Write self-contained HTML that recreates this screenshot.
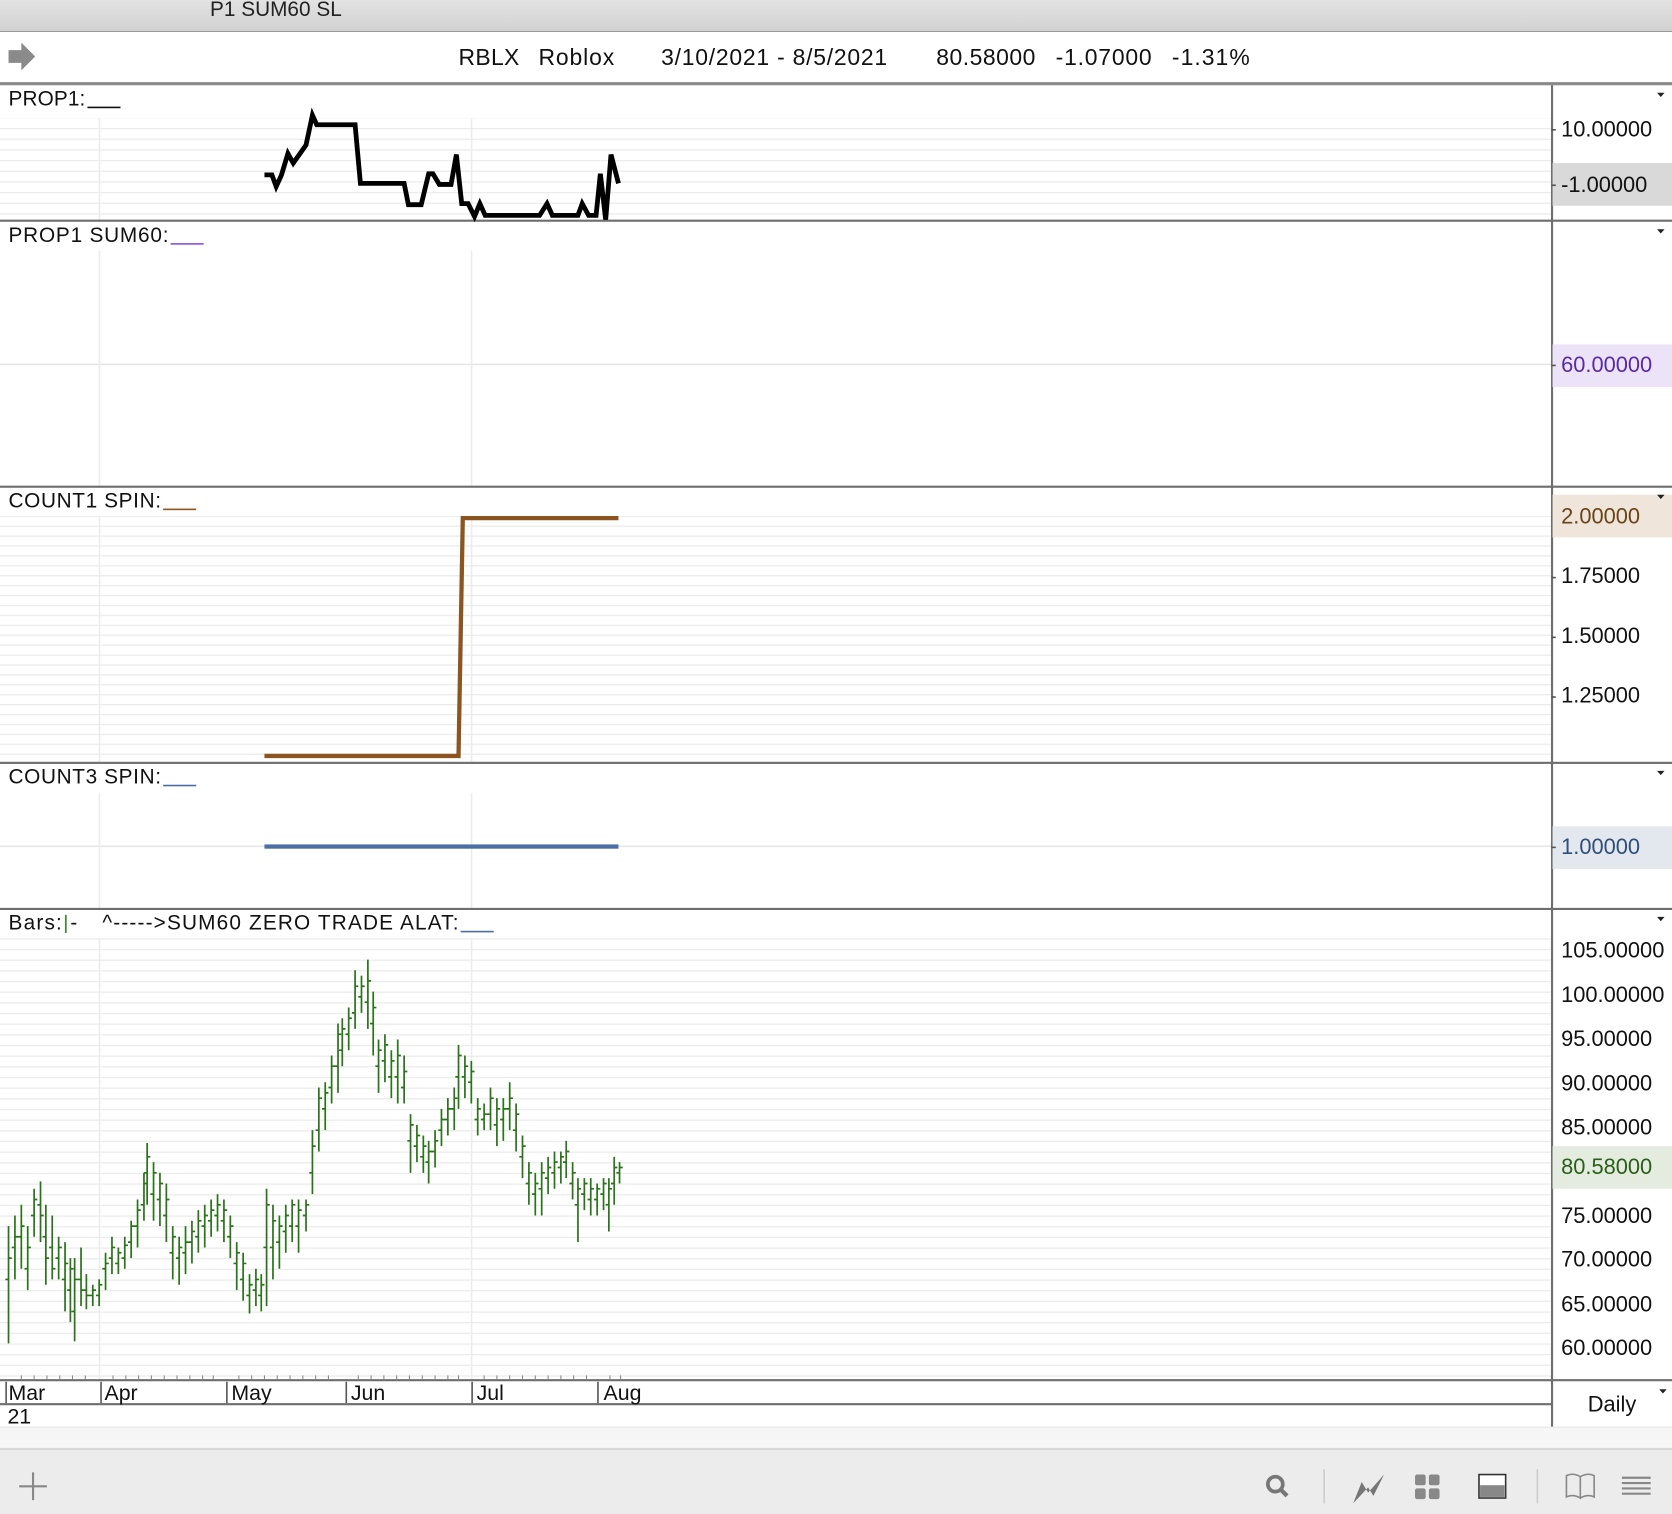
<!DOCTYPE html>
<html><head><meta charset="utf-8"><style>html,body{margin:0;padding:0;background:#fff}svg{display:block}text{font-family:"Liberation Sans",Arial,sans-serif}</style></head><body>
<svg width="1672" height="1514" viewBox="0 0 1568 1420" preserveAspectRatio="none" xmlns="http://www.w3.org/2000/svg">
<defs>
<pattern id="g10" width="1455" height="10" patternUnits="userSpaceOnUse"><rect width="1455" height="1.2" fill="#ebebeb"/></pattern>
<pattern id="g9" width="1455" height="9.3" patternUnits="userSpaceOnUse"><rect width="1455" height="1.2" fill="#ebebeb"/></pattern>
<linearGradient id="tb" x1="0" y1="0" x2="0" y2="1"><stop offset="0" stop-color="#e2e2e2"/><stop offset="1" stop-color="#d2d2d2"/></linearGradient>
</defs>
<rect width="1568" height="1420" fill="#fff"/>
<rect x="0" y="0" width="1568" height="29" fill="url(#tb)"/>
<rect x="0" y="29" width="1568" height="1" fill="#9a9a9a"/>
<text x="197" y="15" font-size="19.5" fill="#222">P1 SUM60 SL</text>
<path d="M8 47h12v-7l13 13-13 13v-7H8z" fill="#8a8a8a"/>
<g font-size="21.5" fill="#111">
<text x="430" y="61" textLength="57">RBLX</text><text x="505" y="61" textLength="71">Roblox</text><text x="620" y="61" textLength="212">3/10/2021 - 8/5/2021</text>
<text x="878" y="61" textLength="93">80.58000</text><text x="990" y="61" textLength="90">-1.07000</text><text x="1099" y="61" textLength="73">-1.31%</text>
</g>
<rect x="0" y="77" width="1568" height="3" fill="#8a8a8a"/>
<rect x="0" y="111" width="1455" height="95" fill="url(#g10)"/>
<rect x="0" y="484" width="1455" height="230" fill="url(#g9)"/>
<rect x="0" y="880" width="1455" height="412" fill="url(#g10)"/>
<rect x="0" y="341" width="1455" height="1.5" fill="#e6e6e6"/>
<rect x="0" y="793" width="1455" height="1.5" fill="#e6e6e6"/>
<g fill="#ececec">
<rect x="92.5" y="111" width="1.5" height="96"/><rect x="441.5" y="111" width="1.5" height="96"/>
<rect x="92.5" y="235" width="1.5" height="221"/><rect x="441.5" y="235" width="1.5" height="221"/>
<rect x="92.5" y="484" width="1.5" height="231"/><rect x="441.5" y="484" width="1.5" height="231"/>
<rect x="92.5" y="744" width="1.5" height="108"/><rect x="441.5" y="744" width="1.5" height="108"/>
<rect x="92.5" y="880" width="1.5" height="414"/><rect x="441.5" y="880" width="1.5" height="414"/>
</g>
<g fill="#6e6e6e">
<rect x="0" y="206" width="1568" height="2"/>
<rect x="0" y="455.5" width="1568" height="2"/>
<rect x="0" y="714.5" width="1568" height="2"/>
<rect x="0" y="851.5" width="1568" height="2"/>
<rect x="0" y="1293.5" width="1568" height="2"/>
<rect x="0" y="1316" width="1455" height="2"/>
<rect x="1454.5" y="80" width="2" height="1258"/>
</g>
<rect x="1456" y="153" width="112" height="40" fill="#d9d9d9"/>
<rect x="1456" y="323" width="112" height="40" fill="#ece3f8"/>
<rect x="1456" y="464" width="112" height="40" fill="#efe5da"/>
<rect x="1456" y="775" width="112" height="40" fill="#e3e8ef"/>
<rect x="1456" y="1075" width="112" height="40" fill="#e3ecdf"/>
<g font-size="19.5" fill="#111">
<text x="8" y="99" textLength="72">PROP1:</text><text x="8" y="227" textLength="150">PROP1 SUM60:</text><text x="8" y="476" textLength="143">COUNT1 SPIN:</text><text x="8" y="735" textLength="143">COUNT3 SPIN:</text>
<text x="8" y="872" textLength="50">Bars:</text><text x="66" y="872">-</text><text x="96" y="872" textLength="334">^-----&gt;SUM60 ZERO TRADE  ALAT:</text>
</g>
<rect x="82" y="100" width="31" height="1.5" fill="#111"/>
<rect x="160" y="228" width="31" height="1.5" fill="#8a4fe0"/>
<rect x="153" y="477" width="31" height="1.5" fill="#8a5520"/>
<rect x="153" y="736" width="31" height="1.5" fill="#4a6fa5"/>
<rect x="61" y="858" width="1.5" height="17" fill="#2a8a1a"/>
<rect x="432" y="873" width="31" height="1.5" fill="#4a6fa5"/>
<g fill="#222"><path d="M1554 87h7l-3.5 4z"/><path d="M1554 215h7l-3.5 4z"/><path d="M1554 464h7l-3.5 4z"/><path d="M1554 723h7l-3.5 4z"/><path d="M1554 860h7l-3.5 4z"/><path d="M1556 1303h7l-3.5 4z"/></g>
<g font-size="20.5" fill="#111">
<text x="1464" y="128">10.00000</text><text x="1464" y="180">-1.00000</text>
<text x="1464" y="349" fill="#5a2aa0">60.00000</text>
<text x="1464" y="491" fill="#6a4418">2.00000</text><text x="1464" y="547">1.75000</text><text x="1464" y="603">1.50000</text><text x="1464" y="659">1.25000</text>
<text x="1464" y="801" fill="#2f4f78">1.00000</text>
<text x="1464" y="898">105.00000</text><text x="1464" y="940">100.00000</text><text x="1464" y="981">95.00000</text><text x="1464" y="1023">90.00000</text><text x="1464" y="1064">85.00000</text>
<text x="1464" y="1101" fill="#2a5f1a">80.58000</text>
<text x="1464" y="1147">75.00000</text><text x="1464" y="1188">70.00000</text><text x="1464" y="1230">65.00000</text><text x="1464" y="1271">60.00000</text>
<text x="1489" y="1324">Daily</text>
</g>
<g fill="#555"><rect x="1455" y="121" width="4" height="1.5"/><rect x="1455" y="173" width="4" height="1.5"/><rect x="1455" y="342" width="4" height="1.5"/><rect x="1455" y="541" width="4" height="1.5"/><rect x="1455" y="597" width="4" height="1.5"/><rect x="1455" y="653" width="4" height="1.5"/><rect x="1455" y="794" width="4" height="1.5"/></g>
<polyline fill="none" stroke="#000" stroke-width="4.5" stroke-linejoin="miter" points="248,164 255,164 259,175 264,164 270,144 275,153 287,136 293,108 297,117 333,117 338,172 379,172 383,192 395,192 402,163 406,163 412,173 423,173 428,145 433,191 439,191 445,203 450,191 455,202 506,202 513,191 518,202 542,202 546,191 552,202 559,202 563,163 568,206 573,145 580,172"/>
<polyline fill="none" stroke="#8a5520" stroke-width="4" points="248,709 430,709 434,486 580,486"/>
<rect x="248" y="792" width="332" height="4" fill="#4a6fa5"/>
<path fill="none" stroke="#2a731b" stroke-width="1.6" d="
M8 1150V1260M5 1200h3M8 1180h3
M14 1140V1200M11 1170h3M14 1160h3
M20 1130V1190M17 1160h3M20 1150h3
M26 1150V1210M23 1190h3M26 1170h3
M32 1115V1160M29 1140h3M32 1125h3
M38 1108V1165M35 1130h3M38 1140h3
M43 1130V1205M40 1160h3M43 1180h3
M49 1140V1200M46 1170h3M49 1190h3
M55 1160V1200M52 1180h3M55 1170h3
M61 1165V1230M58 1200h3M61 1185h3
M66 1180V1240M63 1210h3M66 1190h3
M70 1180V1258M67 1230h3M70 1200h3
M76 1170V1225M73 1200h3M76 1210h3
M81 1195V1228M78 1210h3M81 1215h3
M87 1205V1225M84 1215h3M87 1210h3
M93 1200V1225M90 1215h3M93 1205h3
M99 1175V1210M96 1190h3M99 1185h3
M105 1160V1195M102 1180h3M105 1170h3
M111 1170V1195M108 1185h3M111 1175h3
M117 1160V1190M114 1180h3M117 1168h3
M123 1145V1180M120 1165h3M123 1150h3
M129 1125V1170M126 1150h3M129 1135h3
M135 1100V1145M132 1130h3M135 1110h3
M138 1072V1130M135 1100h3M138 1085h3
M144 1090V1145M141 1120h3M144 1100h3
M150 1100V1150M147 1125h3M150 1110h3
M156 1110V1165M153 1140h3M156 1125h3
M162 1150V1200M159 1175h3M162 1160h3
M168 1160V1205M165 1180h3M168 1170h3
M174 1150V1195M171 1175h3M174 1165h3
M180 1145V1185M177 1165h3M180 1155h3
M186 1135V1175M183 1160h3M186 1145h3
M192 1130V1170M189 1150h3M192 1140h3
M198 1125V1160M195 1145h3M198 1135h3
M204 1120V1155M201 1140h3M204 1130h3
M210 1125V1165M207 1145h3M210 1135h3
M216 1140V1180M213 1160h3M216 1150h3
M222 1165V1210M219 1185h3M222 1175h3
M228 1175V1220M225 1200h3M228 1185h3
M234 1195V1232M231 1215h3M234 1205h3
M240 1190V1225M237 1210h3M240 1200h3
M245 1195V1230M242 1215h3M245 1205h3
M250 1115V1225M247 1170h3M250 1130h3
M256 1130V1200M253 1170h3M256 1145h3
M262 1140V1190M259 1165h3M262 1150h3
M268 1130V1175M265 1155h3M268 1140h3
M274 1125V1165M271 1150h3M274 1130h3
M280 1125V1175M277 1150h3M280 1135h3
M287 1125V1155M284 1140h3M287 1130h3
M293 1060V1120M290 1100h3M293 1075h3
M299 1020V1080M296 1060h3M299 1030h3
M305 1015V1060M302 1040h3M305 1025h3
M311 990V1035M308 1020h3M311 1000h3
M317 960V1025M314 1000h3M317 970h3
M321 955V1000M318 985h3M321 965h3
M327 945V985M324 970h3M327 955h3
M333 910V965M330 950h3M333 925h3
M339 915V950M336 935h3M339 925h3
M345 900V965M342 940h3M345 920h3
M350 930V990M347 960h3M350 945h3
M355 975V1025M352 1000h3M355 985h3
M361 970V1015M358 995h3M361 980h3
M367 985V1030M364 1010h3M367 995h3
M373 975V1035M370 1010h3M373 990h3
M379 990V1035M376 1020h3M379 1005h3
M385 1045V1100M382 1070h3M385 1055h3
M391 1055V1090M388 1075h3M391 1065h3
M397 1065V1100M394 1085h3M397 1075h3
M402 1070V1110M399 1090h3M402 1080h3
M408 1060V1095M405 1080h3M408 1070h3
M414 1040V1075M411 1060h3M414 1050h3
M420 1030V1065M417 1050h3M420 1040h3
M426 1020V1060M423 1040h3M426 1030h3
M430 980V1040M427 1010h3M430 990h3
M436 990V1030M433 1010h3M436 1000h3
M442 995V1035M439 1015h3M442 1005h3
M448 1030V1065M445 1050h3M448 1040h3
M454 1035V1060M451 1050h3M454 1045h3
M460 1020V1060M457 1045h3M460 1030h3
M466 1030V1075M463 1055h3M466 1040h3
M472 1030V1070M469 1050h3M472 1040h3
M478 1015V1060M475 1040h3M478 1030h3
M484 1035V1080M481 1060h3M484 1045h3
M490 1065V1105M487 1085h3M490 1075h3
M496 1090V1130M493 1110h3M496 1100h3
M502 1100V1140M499 1120h3M502 1110h3
M508 1090V1140M505 1115h3M508 1100h3
M514 1085V1120M511 1105h3M514 1095h3
M520 1080V1115M517 1100h3M520 1090h3
M526 1080V1110M523 1095h3M526 1085h3
M531 1070V1105M528 1090h3M531 1080h3
M537 1090V1125M534 1110h3M537 1100h3
M542 1105V1165M539 1130h3M542 1115h3
M548 1105V1135M545 1120h3M548 1110h3
M554 1105V1140M551 1125h3M554 1115h3
M560 1110V1140M557 1125h3M560 1115h3
M566 1105V1135M563 1120h3M566 1110h3
M571 1105V1155M568 1130h3M571 1115h3
M576 1085V1130M573 1110h3M576 1095h3
M581 1090V1110M578 1100h3M581 1095h3"/>
<g fill="#555">
<rect x="5" y="1296" width="1.5" height="20"/><rect x="94" y="1296" width="1.5" height="20"/><rect x="212" y="1296" width="1.5" height="20"/><rect x="324" y="1296" width="1.5" height="20"/><rect x="442" y="1296" width="1.5" height="20"/><rect x="560" y="1296" width="1.5" height="20"/>
</g>
<path stroke="#888" stroke-width="1" d="M20 1290v4M32 1290v4M44 1290v4M56 1290v4M68 1290v4M80 1290v4M106 1290v4M118 1290v4M130 1290v4M142 1290v4M154 1290v4M166 1290v4M178 1290v4M190 1290v4M200 1290v4M224 1290v4M236 1290v4M248 1290v4M260 1290v4M272 1290v4M284 1290v4M296 1290v4M308 1290v4M336 1290v4M348 1290v4M360 1290v4M372 1290v4M384 1290v4M396 1290v4M408 1290v4M420 1290v4M430 1290v4M454 1290v4M466 1290v4M478 1290v4M490 1290v4M502 1290v4M514 1290v4M526 1290v4M538 1290v4M550 1290v4M572 1290v4M582 1290v4"/>
<g font-size="20" fill="#111">
<text x="8" y="1313">Mar</text><text x="98" y="1313">Apr</text><text x="217" y="1313">May</text><text x="329" y="1313">Jun</text><text x="447" y="1313">Jul</text><text x="566" y="1313">Aug</text>
<text x="7" y="1335">21</text>
</g>
<rect x="0" y="1338" width="1568" height="1.5" fill="#e6e6e6"/>
<rect x="0" y="1339" width="1568" height="20" fill="#f6f6f6"/>
<rect x="0" y="1358" width="1568" height="2" fill="#d8d8d8"/>
<rect x="0" y="1360" width="1568" height="60" fill="#ececec"/>
<path d="M31 1381v26M18 1394h26" stroke="#888" stroke-width="2"/>
<circle cx="1196" cy="1392" r="7" fill="none" stroke="#777" stroke-width="3.5"/>
<path d="M1201 1397l6 6" stroke="#777" stroke-width="4"/>
<rect x="1241" y="1378" width="1.5" height="32" fill="#ccc"/>
<path d="M1269 1410l8-20 6 10 15-17-10 20-5-8z" fill="#777"/>
<g fill="#888"><rect x="1327" y="1383" width="10" height="10" rx="2"/><rect x="1340" y="1383" width="10" height="10" rx="2"/><rect x="1327" y="1396" width="10" height="10" rx="2"/><rect x="1340" y="1396" width="10" height="10" rx="2"/></g>
<rect x="1387" y="1383" width="25" height="22" fill="#fff" stroke="#333" stroke-width="1.5"/>
<rect x="1388" y="1393" width="23" height="11" fill="#888"/>
<rect x="1441" y="1378" width="1.5" height="32" fill="#ccc"/>
<path d="M1469 1384q6-3 13 1v20q-7-4-13-1zM1482 1385q7-4 13-1v20q-6-3-13 1" fill="none" stroke="#888" stroke-width="1.5"/>
<path d="M1521 1386h27M1521 1391h27M1521 1396h27M1521 1401h27" stroke="#888" stroke-width="2"/>
</svg>
</body></html>
